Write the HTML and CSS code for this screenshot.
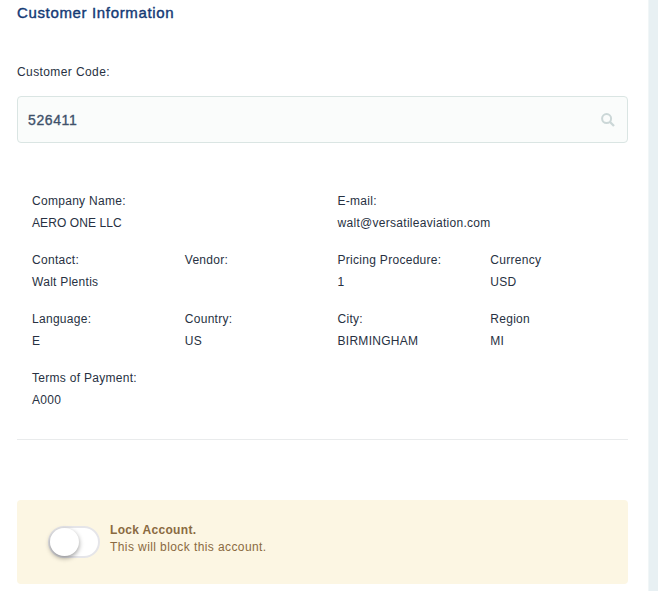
FILE: index.html
```html
<!DOCTYPE html>
<html lang="en">
<head>
<meta charset="utf-8">
<title>Customer Information</title>
<link rel="stylesheet" href="styles.css">
</head>
<body>
<main class="panel">
  <h1 class="title">Customer Information</h1>
  <label class="code-label" for="code">Customer Code:</label>
  <div class="search">
    <span class="search-value" id="code">526411</span>
    <svg class="search-icon" viewBox="0 0 14 14" fill="none" stroke="#cbd7d7" stroke-width="2"><circle cx="5.6" cy="5.6" r="4.5"/><path d="M9 9l4 4" stroke-width="2.3"/></svg>
  </div>
  <dl class="details">
    <div class="field wide"><dt>Company Name:</dt><dd class="tight">AERO ONE LLC</dd></div>
    <div class="field wide"><dt>E-mail:</dt><dd>walt@versatileaviation.com</dd></div>
    <div class="field"><dt>Contact:</dt><dd>Walt Plentis</dd></div>
    <div class="field"><dt>Vendor:</dt><dd></dd></div>
    <div class="field"><dt>Pricing Procedure:</dt><dd>1</dd></div>
    <div class="field"><dt>Currency</dt><dd>USD</dd></div>
    <div class="field"><dt>Language:</dt><dd>E</dd></div>
    <div class="field"><dt>Country:</dt><dd>US</dd></div>
    <div class="field"><dt>City:</dt><dd>BIRMINGHAM</dd></div>
    <div class="field"><dt>Region</dt><dd>MI</dd></div>
    <div class="field"><dt>Terms of Payment:</dt><dd>A000</dd></div>
  </dl>
  <section class="lock">
    <span class="switch"><span class="knob"></span></span>
    <div class="lock-text">
      <strong>Lock Account.</strong>
      <p>This will block this account.</p>
    </div>
  </section>
</main>
</body>
</html>
```
FILE: styles.css
```css
* { box-sizing: border-box; }
body {
  margin: 0;
  height: 591px;
  overflow: hidden;
  background: #e8f0f3;
  color: #273142;
  font: 12px/22px "Liberation Sans", Arial, sans-serif;
  letter-spacing: 0.29px;
}
.panel {
  width: 649px;
  height: 591px;
  padding: 2px 20px 0 17px;
  background: #fff;
  border-right: 1px solid #f1f6f7;
}
.title {
  margin: 0;
  font-size: 15px;
  line-height: 22px;
  font-weight: 400;
  letter-spacing: 0.65px;
  color: #143a75;
  -webkit-text-stroke: 0.4px #143a75;
}
.code-label {
  display: block;
  margin-top: 37px;
  letter-spacing: 0.4px;
}
.search {
  display: flex;
  align-items: center;
  justify-content: space-between;
  height: 47px;
  margin-top: 13px;
  padding: 0 12px 0 10px;
  border: 1px solid #dae5e3;
  border-radius: 4px;
  background: #fafcfb;
}
.search-value {
  font-size: 14px;
  letter-spacing: 0.6px;
  color: #40516a;
  -webkit-text-stroke: 0.35px #40516a;
}
.search-icon { width: 14px; height: 14px; }
.details {
  display: grid;
  grid-template-columns: repeat(4, 152.75px);
  row-gap: 15px;
  height: 297px;
  align-content: start;
  margin: 0;
  padding: 47px 0 0 15px;
  border-bottom: 1px solid #e9ebec;
}
.field { height: 44px; }
.wide { grid-column: span 2; }
dd { margin: 0; }
.tight { letter-spacing: 0.08px; }
.lock {
  display: flex;
  height: 84px;
  margin-top: 60px;
  padding: 26px 31px;
  border-radius: 4px;
  background: #fcf6e3;
  color: #8a6a41;
}
.switch {
  width: 52px;
  height: 32px;
  border: 2px solid #e5e5e9;
  border-radius: 16px;
  background: #fff;
}
.knob {
  display: block;
  width: 29px;
  height: 28px;
  border-radius: 50%;
  background: #fff;
  box-shadow: 0 2px 5px rgba(0, 0, 0, 0.4);
}
.lock-text {
  margin: -4px 0 0 10px;
  line-height: 17px;
}
.lock-text strong { display: block; letter-spacing: 0.32px; }
.lock-text p { margin: 0; letter-spacing: 0.41px; }
```
